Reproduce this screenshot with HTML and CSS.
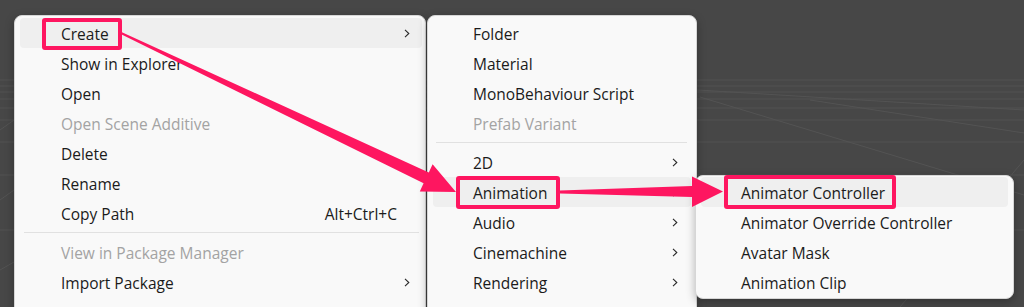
FILE: index.html
```html
<!DOCTYPE html>
<html lang="en">
<head>
<meta charset="utf-8">
<title>Unity context menu</title>
<link rel="stylesheet" href="styles.css">
</head>
<body>
<div class="scene">
  <svg class="grid" width="1024" height="307" viewBox="0 0 1024 307">
    <g stroke="#595959" stroke-width="1" fill="none">
      <path d="M0 80 H1024"/>
      <path d="M0 86 H1024"/>
      <path d="M0 92 H1024"/>
      <path d="M0 99 H1024"/>
      <path d="M0 108 H1024"/>
      <path d="M0 120 H1024"/>
      <path d="M0 142 H1024"/>
      <path d="M0 175 H1024"/>
      <path d="M0 230 H1024"/>
      <path d="M700 97 L1024 195"/>
      <path d="M810 100 L1024 133"/>
      <path d="M600 84 L1024 110"/>
      <path d="M0 130 L14 120"/>
      <path d="M0 200 L14 190"/>
      <path d="M0 270 L14 262"/>
      <path d="M1024 160 L900 307"/>
    </g>
  </svg>

  <div class="menu menu-main">
    <div class="item active"><span class="label">Create</span><span class="chev"><svg width="6" height="9" viewBox="0 0 6 9"><path d="M1 0.8 L4.8 4.5 L1 8.2"/></svg></span></div>
    <div class="item"><span class="label">Show in Explorer</span><span class="chev"></span></div>
    <div class="item"><span class="label">Open</span><span class="chev"></span></div>
    <div class="item disabled"><span class="label">Open Scene Additive</span><span class="chev"></span></div>
    <div class="item"><span class="label">Delete</span><span class="chev"></span></div>
    <div class="item"><span class="label">Rename</span><span class="chev"></span></div>
    <div class="item"><span class="label">Copy Path</span><span class="shortcut">Alt+Ctrl+C</span><span class="chev"></span></div>
    <div class="sep"></div>
    <div class="item disabled"><span class="label">View in Package Manager</span><span class="chev"></span></div>
    <div class="item"><span class="label">Import Package</span><span class="chev"><svg width="6" height="9" viewBox="0 0 6 9"><path d="M1 0.8 L4.8 4.5 L1 8.2"/></svg></span></div>
  </div>

  <div class="menu menu-create">
    <div class="item"><span class="label">Folder</span><span class="chev"></span></div>
    <div class="item"><span class="label">Material</span><span class="chev"></span></div>
    <div class="item"><span class="label">MonoBehaviour Script</span><span class="chev"></span></div>
    <div class="item disabled"><span class="label">Prefab Variant</span><span class="chev"></span></div>
    <div class="sep"></div>
    <div class="item"><span class="label">2D</span><span class="chev"><svg width="6" height="9" viewBox="0 0 6 9"><path d="M1 0.8 L4.8 4.5 L1 8.2"/></svg></span></div>
    <div class="item active"><span class="label">Animation</span><span class="chev"><svg width="6" height="9" viewBox="0 0 6 9"><path d="M1 0.8 L4.8 4.5 L1 8.2"/></svg></span></div>
    <div class="item"><span class="label">Audio</span><span class="chev"><svg width="6" height="9" viewBox="0 0 6 9"><path d="M1 0.8 L4.8 4.5 L1 8.2"/></svg></span></div>
    <div class="item"><span class="label">Cinemachine</span><span class="chev"><svg width="6" height="9" viewBox="0 0 6 9"><path d="M1 0.8 L4.8 4.5 L1 8.2"/></svg></span></div>
    <div class="item"><span class="label">Rendering</span><span class="chev"><svg width="6" height="9" viewBox="0 0 6 9"><path d="M1 0.8 L4.8 4.5 L1 8.2"/></svg></span></div>
  </div>

  <div class="menu menu-anim">
    <div class="item active"><span class="label">Animator Controller</span><span class="chev"></span></div>
    <div class="item"><span class="label">Animator Override Controller</span><span class="chev"></span></div>
    <div class="item"><span class="label">Avatar Mask</span><span class="chev"></span></div>
    <div class="item"><span class="label">Animation Clip</span><span class="chev"></span></div>
  </div>

  <div class="mark mark-create"></div>
  <div class="mark mark-animation"></div>
  <div class="mark mark-controller"></div>

  <svg class="arrows" width="1024" height="307" viewBox="0 0 1024 307">
    <polygon points="120.6,33.9 121.4,32.1 428.8,172.4 432.6,164.3 456,192 419.8,191.4 423.6,183.3"/>
    <polygon points="560,190.6 560,193.4 692,197 692,207 723,191.5 692,176.5 692,186"/>
  </svg>
</div>
</body>
</html>
```

FILE: styles.css
```css
html, body {
  margin: 0;
  padding: 0;
}

body {
  width: 1024px;
  height: 307px;
  overflow: hidden;
  background: #474747;
  font-family: "Open Sans", "Noto Sans", sans-serif;
  font-size: 15.5px;
  color: #1b1b1b;
}

.scene {
  position: relative;
  width: 1024px;
  height: 307px;
  overflow: hidden;
}

.grid {
  position: absolute;
  left: 0;
  top: 0;
  opacity: 0.7;
}

.menu {
  position: absolute;
  display: flex;
  flex-direction: column;
  box-sizing: border-box;
  background: #f9f9f9;
  border: 1px solid #d6d6d6;
  border-radius: 8px;
  box-shadow: 0 3px 10px rgba(0, 0, 0, 0.28);
}

.menu-main {
  left: 14px;
  top: 15px;
  width: 412px;
  height: 340px;
  padding-top: 2px;
}

.menu-create {
  left: 427px;
  top: 15px;
  width: 270px;
  height: 340px;
  padding-top: 2px;
}

.menu-anim {
  left: 695px;
  top: 175px;
  width: 319px;
  padding: 1px 0 0;
  height: 124px;
}

.item {
  display: flex;
  align-items: flex-start;
  flex: none;
  box-sizing: border-box;
  height: 30px;
  line-height: 30px;
  margin: 0 5px;
  padding: 1px 13px 0 40px;
  border-radius: 4px;
  white-space: nowrap;
}

.menu-main .item {
  margin: 0 3px 0 5px;
  padding: 1px 12px 0 41px;
}

.item.active {
  background: #efefef;
}

.item.disabled {
  color: #a3a3a3;
}

.label {
  flex: 1;
}

.shortcut {
  margin-left: 16px;
}

.chev {
  display: flex;
  align-items: center;
  align-self: center;
  width: 6px;
  height: 9px;
  margin-left: 7px;
}

.chev svg path {
  fill: none;
  stroke: #2a2a2a;
  stroke-width: 1.1;
}

.sep {
  flex: none;
  height: 1px;
  margin: 4px 6px 4px 9px;
  background: #e1e1e1;
}

.menu-create .sep {
  margin: 4px 9px 4px 8px;
}

.mark {
  position: absolute;
  box-sizing: border-box;
  border: 4px solid #fe1660;
  border-radius: 3px;
}

.mark-create {
  left: 42px;
  top: 18px;
  width: 80px;
  height: 32px;
}

.mark-animation {
  left: 456px;
  top: 176px;
  width: 104px;
  height: 33px;
}

.mark-controller {
  left: 724px;
  top: 175px;
  width: 172px;
  height: 34px;
}

.arrows {
  position: absolute;
  left: 0;
  top: 0;
  pointer-events: none;
}

.arrows polygon {
  fill: #fe1660;
}
```
